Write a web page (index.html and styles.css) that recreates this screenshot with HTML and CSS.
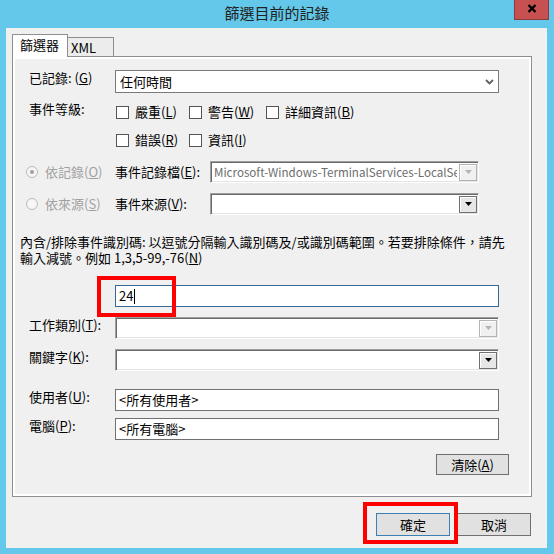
FILE: index.html
```html
<!DOCTYPE html>
<html>
<head>
    <meta charset="utf-8">
    <title>篩選目前的記錄</title>
    <link rel="stylesheet" href="styles.css">
</head>
<body>
<div class="window">
    <div class="titlebar">
        <span class="title">篩選目前的記錄</span>
        <a href="#" class="close">
            <svg width="10" height="9" viewBox="0 0 10 9"><path d="M1.5 1 L8.5 8 M8.5 1 L1.5 8" stroke="#000" stroke-width="2.4" fill="none"/></svg>
        </a>
    </div>
    <div class="client">
        <div class="tabs">
            <a href="#" class="tab active">篩選器</a>
            <a href="#" class="tab xml">XML</a>
        </div>
        <div class="panel">
            <div class="panel-inner">
                <div class="row">
                    <span class="lbl">已記錄: (<u>G</u>)</span>
                    <div class="combo flat">
                        <span class="combo-text">任何時間</span>
                        <svg class="chev" width="9" height="6" viewBox="0 0 9 6"><path d="M1 1 L4.5 4.5 L8 1" stroke="#606060" stroke-width="1.8" fill="none"/></svg>
                    </div>
                </div>
                <div class="row row-level">
                    <span class="lbl">事件等級:</span>
                    <div class="checks">
                        <span class="check"><i class="box"></i><span>嚴重(<u>L</u>)</span></span>
                        <span class="check"><i class="box"></i><span>警告(<u>W</u>)</span></span>
                        <span class="check"><i class="box"></i><span>詳細資訊(<u>B</u>)</span></span>
                        <span class="check"><i class="box"></i><span>錯誤(<u>R</u>)</span></span>
                        <span class="check"><i class="box"></i><span>資訊(<u>I</u>)</span></span>
                    </div>
                </div>
                <div class="row row-src first">
                    <span class="opt"><i class="radio on"><b></b></i><span>依記錄(<u>O</u>)</span></span>
                    <span class="sublbl">事件記錄檔(<u>E</u>):</span>
                    <div class="combo classic short">
                        <span class="combo-text gray">Microsoft-Windows-TerminalServices-LocalSessionManager/Operational</span>
                        <span class="ddbtn off"><svg width="7" height="4" viewBox="0 0 7 4"><path d="M0 0 H7 L3.5 4 Z" fill="#b4b4b4"/></svg></span>
                    </div>
                </div>
                <div class="row row-src">
                    <span class="opt"><i class="radio"></i><span>依來源(<u>S</u>)</span></span>
                    <span class="sublbl">事件來源(<u>V</u>):</span>
                    <div class="combo classic short">
                        <span class="combo-text"></span>
                        <span class="ddbtn"><svg width="7" height="4" viewBox="0 0 7 4"><path d="M0 0 H7 L3.5 4 Z" fill="#000"/></svg></span>
                    </div>
                </div>
                <p class="desc">內含/排除事件識別碼: 以逗號分隔輸入識別碼及/或識別碼範圍。若要排除條件，請先<br>輸入減號。例如 1,3,5-99,-76(<u>N</u>)</p>
                <div class="row row-id">
                    <div class="field focus">24<span class="caret"></span></div>
                </div>
                <div class="row row-task">
                    <span class="lbl">工作類別(<u>T</u>):</span>
                    <div class="combo classic">
                        <span class="combo-text"></span>
                        <span class="ddbtn off"><svg width="7" height="4" viewBox="0 0 7 4"><path d="M0 0 H7 L3.5 4 Z" fill="#b4b4b4"/></svg></span>
                    </div>
                </div>
                <div class="row row-kw">
                    <span class="lbl">關鍵字(<u>K</u>):</span>
                    <div class="combo classic">
                        <span class="combo-text"></span>
                        <span class="ddbtn"><svg width="7" height="4" viewBox="0 0 7 4"><path d="M0 0 H7 L3.5 4 Z" fill="#000"/></svg></span>
                    </div>
                </div>
                <div class="row row-user">
                    <span class="lbl">使用者(<u>U</u>):</span>
                    <div class="field">&lt;所有使用者&gt;</div>
                </div>
                <div class="row row-pc">
                    <span class="lbl">電腦(<u>P</u>):</span>
                    <div class="field">&lt;所有電腦&gt;</div>
                </div>
                <div class="row row-clear">
                    <a href="#" class="btn clear"><span>清除(<u>A</u>)</span></a>
                </div>
            </div>
        </div>
        <div class="footer">
            <a href="#" class="btn default">確定</a>
            <a href="#" class="btn">取消</a>
        </div>
    </div>
    <div class="mark mark-id"></div>
    <div class="mark mark-ok"></div>
</div>
</body>
</html>
```

FILE: styles.css
```css
body{
    margin: 0;
    font-family: "Noto Sans CJK TC", "Noto Sans", sans-serif;
    font-size: 13px;
    color: #000;
    background: #63c8e9;
}
p{
    margin: 0;
    padding: 0;
}
a{
    text-decoration: none;
    color: #000;
}
.window{
    position: relative;
    width: 554px;
    height: 554px;
    background: #63c8e9;
}
.titlebar{
    position: relative;
    height: 28px;
    text-align: center;
}
.title{
    font-size: 15px;
    line-height: 26px;
    color: #222;
}
.close{
    position: absolute;
    top: 0;
    left: 514px;
    width: 35px;
    height: 20px;
    box-sizing: border-box;
    background: #c75050;
    border: 1px solid #8a3a3a;
    border-top: none;
    display: flex;
    align-items: center;
    justify-content: center;
    padding-bottom: 3px;
}
.client{
    margin-left: 6px;
    width: 541px;
    height: 520px;
    box-sizing: border-box;
    padding: 6px 0 0 6px;
    background: #f0f0f0;
}
.tabs{
    position: relative;
    z-index: 1;
    display: flex;
    height: 23px;
    margin-bottom: -1px;
}
.tab{
    box-sizing: border-box;
    border: 1px solid #8c8e94;
    border-bottom: none;
    line-height: 20px;
}
.tab.active{
    width: 56px;
    height: 23px;
    padding-left: 7px;
    background: #fff;
}
.tab.xml{
    width: 46px;
    height: 19px;
    margin-top: 3px;
    border-left: none;
    padding-left: 3px;
    line-height: 19px;
    background: #ececec;
}
.panel{
    width: 520px;
    height: 441px;
    box-sizing: border-box;
    border: 1px solid #8c8e94;
    padding: 2px;
    background: #fff;
}
.panel-inner{
    height: 100%;
    box-sizing: border-box;
    padding-top: 11px;
    background: #f0f0f0;
}
.row{
    display: flex;
    align-items: flex-start;
    padding-left: 14px;
    line-height: 16px;
}
.lbl{
    flex: none;
    width: 86px;
}
.combo{
    box-sizing: border-box;
    width: 384px;
    height: 23px;
    background: #fff;
    display: flex;
    align-items: center;
    justify-content: space-between;
    overflow: hidden;
}
.combo.flat{
    border: 1px solid #7a7a7a;
    padding: 0 4px 0 4px;
}
.combo-text{
    white-space: nowrap;
    overflow: hidden;
    flex: 1;
}
.combo-text.gray{
    color: #6d6d6d;
    font-size: 11.6px;
}
.combo.classic{
    height: 22px;
    border: 1px solid;
    border-color: #a0a0a0 #fff #fff #a0a0a0;
    box-shadow: inset 1px 1px 0 #696969, inset -1px -1px 0 #e3e3e3;
    padding: 1px 1px 1px 3px;
}
.combo.short{
    width: 269px;
}
.ddbtn{
    flex: none;
    box-sizing: border-box;
    width: 18px;
    height: 17px;
    margin-left: 2px;
    border: 1px solid #707070;
    box-shadow: inset 1px 1px 0 #fff;
    background: #e6e6e6;
    display: flex;
    align-items: center;
    justify-content: center;
}
.ddbtn.off{
    border-color: #b4b4b4;
    background: #f0f0f0;
}
.row-level{
    margin-top: 8px;
}
.checks{
    display: grid;
    grid-template-columns: 73px 77px auto;
    grid-auto-rows: 18px;
    row-gap: 10px;
    margin-top: 2px;
}
.check{
    display: flex;
    align-items: center;
    gap: 6px;
    white-space: nowrap;
}
.box{
    width: 13px;
    height: 13px;
    box-sizing: border-box;
    margin-left: 1px;
    border: 1px solid #555;
    background: #fff;
}
.row-src{
    align-items: center;
    margin-top: 10px;
    padding-left: 11px;
}
.row-src.first{
    margin-top: 12px;
}
.opt{
    flex: none;
    width: 89px;
    display: flex;
    align-items: center;
    gap: 7px;
    white-space: nowrap;
    color: #a0a0a0;
}
.radio{
    width: 12px;
    height: 12px;
    box-sizing: border-box;
    border: 1px solid #bcbcbc;
    border-radius: 50%;
    background: #f6f6f6;
    display: flex;
    align-items: center;
    justify-content: center;
}
.radio b{
    width: 4px;
    height: 4px;
    border-radius: 50%;
    background: #a0a0a0;
}
.sublbl{
    flex: none;
    width: 95px;
    white-space: nowrap;
}
.desc{
    margin-top: 19px;
    padding-left: 5px;
    line-height: 16px;
}
.row-id{
    margin-top: 19px;
    padding-left: 100px;
}
.field{
    box-sizing: border-box;
    width: 384px;
    height: 22px;
    border: 1px solid #707070;
    background: #fff;
    padding-left: 3px;
    line-height: 20px;
    white-space: nowrap;
}
.field.focus{
    border-color: #36699a;
}
.caret{
    display: inline-block;
    width: 1px;
    height: 15px;
    margin-left: 1px;
    vertical-align: -3px;
    background: #000;
}
.row-task{
    margin-top: 10px;
}
.row-kw{
    margin-top: 10px;
}
.row-user{
    margin-top: 18px;
}
.row-pc{
    margin-top: 7px;
}
.row-clear{
    margin-top: 14px;
    justify-content: flex-end;
    padding-right: 20px;
}
.btn{
    box-sizing: border-box;
    display: flex;
    align-items: center;
    justify-content: center;
    width: 74px;
    height: 23px;
    border: 1px solid #707070;
    background: #e1e1e1;
}
.btn.clear{
    width: 73px;
    height: 21px;
}
.btn.default{
    border-color: #3c7fb1;
}
.footer{
    display: flex;
    justify-content: flex-end;
    gap: 7px;
    margin-top: 16px;
    padding-right: 16px;
}
.mark{
    position: absolute;
    box-sizing: border-box;
    border: 4px solid #f00;
}
.mark-id{
    left: 97px;
    top: 276px;
    width: 79px;
    height: 41px;
}
.mark-ok{
    left: 363px;
    top: 502px;
    width: 95px;
    height: 42px;
}
```
